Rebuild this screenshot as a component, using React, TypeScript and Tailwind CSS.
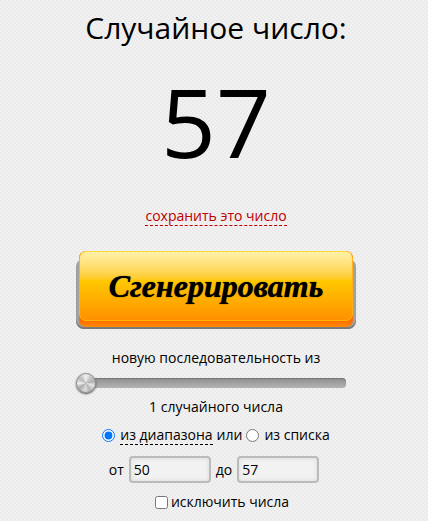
import { useState } from "react";

const PAPER =
  "bg-[#f1f1f1] bg-[image:radial-gradient(circle_at_1px_1px,#dcdcdc_0px,transparent_1px),radial-gradient(circle_at_3px_3px,#e0e0e0_0px,transparent_1px)] bg-[length:4px_4px]";

const THUMB =
  "[&::-webkit-slider-thumb]:appearance-none [&::-webkit-slider-thumb]:-ml-[7px] [&::-webkit-slider-thumb]:size-[20px] [&::-webkit-slider-thumb]:rounded-full [&::-webkit-slider-thumb]:border [&::-webkit-slider-thumb]:border-[#909090] [&::-webkit-slider-thumb]:bg-[conic-gradient(#eeeeee,#c4c4c4_12%,#b0b0b0_22%,#e6e6e6_30%,#b4b4b4_42%,#dddddd_52%,#aaaaaa_65%,#eeeeee_74%,#b8b8b8_85%,#f4f4f4)] [&::-webkit-slider-thumb]:shadow-[0_1px_2px_#444444]";

const INPUT =
  "h-[27px] w-[82px] rounded-[4px] border-2 border-[#bbbbbb] bg-[#f5f5f5]/60 px-[3px] text-sm shadow-[inset_0_0_4px_#d8d8d8] outline-none";

const App = () => {
  const [number, setNumber] = useState(57);
  const [count, setCount] = useState(1);
  const [source, setSource] = useState("range");
  const [from, setFrom] = useState("50");
  const [to, setTo] = useState("57");

  const generate = () => {
    const min = Number(from);
    const max = Number(to);
    setNumber(Math.floor(Math.random() * (max - min + 1)) + min);
  };

  return (
    <div
      className={`flex min-h-screen flex-col items-center pt-2 pl-1 font-['Open_Sans','Noto_Sans',sans-serif] text-sm leading-5 text-black ${PAPER}`}
    >
      <h1 className="text-[30px] leading-10">Случайное число:</h1>
      <div className="mt-[25px] text-[96px] leading-[96px]">{number}</div>
      <a
        href="#save"
        className="mt-[37px] h-5 border-b border-dashed border-[#bb0000] text-[#bb0000]"
      >
        сохранить это число
      </a>

      <button
        type="button"
        onClick={generate}
        className="relative mt-[25px] h-[78px] w-[280px] cursor-pointer px-[3px] pb-[2px]"
      >
        <span className="absolute inset-x-0 top-[8px] bottom-0 rounded-[8px] bg-[#a2a2a2] shadow-[inset_0_-2px_1px_#777777]"></span>
        <span className="relative block h-full rounded-[7px] bg-linear-to-b from-[#ff6600] from-90% to-[#ff8a00] pb-[6px]">
          <span className="flex h-full items-center justify-center rounded-[7px] border border-t-[#ffd633] border-r-[#ffb01a] border-b-[#ffb400] border-l-[#ffb01a] bg-linear-to-b from-[#fff2a8] via-[#ffc800] via-42% to-[#ff9000] font-['Liberation_Serif',serif] text-[32px] leading-10 font-bold italic [text-shadow:0_0_1px_#000000]">
            Сгенерировать
          </span>
        </span>
      </button>

      <label htmlFor="count" className="mt-[19px]">
        новую последовательность из
      </label>
      <input
        id="count"
        type="range"
        min={1}
        max={100}
        value={count}
        onChange={(e) => setCount(Number(e.target.value))}
        className={`mt-[10px] mr-[3px] h-[10px] w-[263px] appearance-none rounded-[4px] bg-linear-to-b from-[#8f8f8f] to-[#b3b3b3] shadow-[inset_0_1px_1px_#777777] ${THUMB}`}
      />
      <div className="mt-[9px]">{count} случайного числа</div>

      <div className="mt-2 flex items-center gap-1">
        <label className="flex h-5 items-center gap-[5px]">
          <input
            type="radio"
            name="source"
            checked={source === "range"}
            onChange={() => setSource("range")}
            className="size-[13px]"
          />
          <span className="h-5 border-b border-dashed border-black">
            из диапазона
          </span>
        </label>
        <span>или</span>
        <label className="flex items-center gap-[5px]">
          <input
            type="radio"
            name="source"
            checked={source === "list"}
            onChange={() => setSource("list")}
            className="size-[13px]"
          />
          из списка
        </label>
      </div>

      <div className="mt-[11px] flex items-center gap-[5px] pr-1">
        <label htmlFor="from">от</label>
        <input
          id="from"
          type="text"
          value={from}
          onChange={(e) => setFrom(e.target.value)}
          className={INPUT}
        />
        <label htmlFor="to">до</label>
        <input
          id="to"
          type="text"
          value={to}
          onChange={(e) => setTo(e.target.value)}
          className={INPUT}
        />
      </div>

      <label className="mt-[9px] flex items-center gap-[3px] pl-3">
        <input type="checkbox" className="size-[13px]" />
        исключить числа
      </label>
    </div>
  );
};

export default App;
